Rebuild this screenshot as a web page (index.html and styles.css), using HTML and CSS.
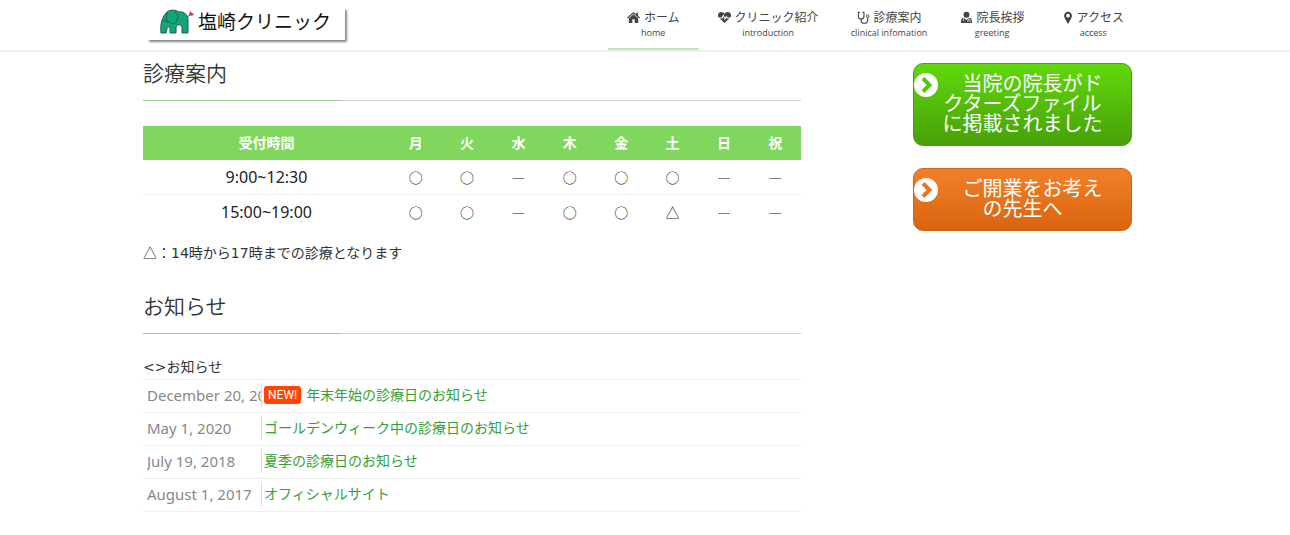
FILE: index.html
```html
<!DOCTYPE html>
<html lang="ja">
<head>
    <meta charset="UTF-8">
    <meta name="viewport" content="width=device-width, initial-scale=1.0">
    <title>塩崎クリニック</title>
    <link rel="stylesheet" href="styles.css">
</head>
<body>
    <header class="site-header">
        <div class="container header-inner">
            <a class="logo" href="#">
                <svg class="logo-mark" viewBox="0 0 34 25" aria-hidden="true">
                    <path d="M1 24C0 15 2 8 7 3c4-3 9-2 12 0 5-1 9 3 9 8v13h-6v-6c-1-3-5-3-6 0v6h-6v-5c-1-2-3-1-3 1l-1 4z" fill="#12a577" stroke="#205f50" stroke-width="1"/>
                    <path d="M8 4c-3 4-2 9 2 9 2 3 6 2 7-2 2-3 1-6-2-8M3 12c2-1 4 0 4 2" fill="none" stroke="#205f50" stroke-width="1"/>
                    <path d="M27 8l3-2" stroke="#205f50" stroke-width="1"/>
                    <path d="M29 6l1-4 2 2 2 1-2 2z" fill="#c43c6c"/>
                </svg>
                <span>塩崎クリニック</span>
            </a>
            <nav class="main-nav">
                <a class="nav-item active" href="#">
                    <span class="nav-label">
                        <svg class="icon" viewBox="0 0 14 14" aria-hidden="true"><path d="M7 1l3 2.600V2h2v3.300l2 1.800-.8.9L7 2.800.8 8 0 7.100zM7 3.600l5 4.200V13H8.300V9H5.700v4H2V7.800z"/></svg>
                        ホーム
                    </span>
                    <span class="nav-sub">home</span>
                </a>
                <a class="nav-item" href="#">
                    <span class="nav-label">
                        <svg class="icon" viewBox="0 0 14 14" aria-hidden="true"><path d="M7 13L1.800 8h3l.9-2 1.800 4 1.500-3 .5 1h2.700zM.6 7C-1 4 .5 1 3.500 1 5 1 6.300 2 7 3c.7-1 2-2 3.500-2 3 0 4.500 3 2.900 6h-3.100L9 4.800 7.500 7.600 5.700 3.500 4.100 7z"/></svg>
                        クリニック紹介
                    </span>
                    <span class="nav-sub">introduction</span>
                </a>
                <a class="nav-item" href="#">
                    <span class="nav-label">
                        <svg class="icon" viewBox="0 0 14 14" aria-hidden="true"><path d="M3 1.500H1.500v4.200c0 4 6 4 6 0V1.500H6M4.500 8.700v1.500c0 4 7 4 7 0V7" fill="none" stroke="currentColor" stroke-width="1.200"/><circle cx="11.500" cy="5.500" r="1.500" fill="none" stroke="currentColor"/></svg>
                        診療案内
                    </span>
                    <span class="nav-sub">clinical infomation</span>
                </a>
                <a class="nav-item" href="#">
                    <span class="nav-label">
                        <svg class="icon" viewBox="0 0 14 14" aria-hidden="true"><circle cx="7" cy="4" r="3.200"/><path d="M4 7.200l3 2.600 3-2.600c2.500.3 3.200 2.800 3 5.800H1c-.2-3 .5-5.500 3-5.800z"/><path d="M3.800 8v3M8.500 12v-1.500c0-1.500 2.500-1.500 2.500 0V12M9.800 9.300V8" fill="none" stroke="#fff" stroke-width=".8"/></svg>
                        院長挨拶
                    </span>
                    <span class="nav-sub">greeting</span>
                </a>
                <a class="nav-item" href="#">
                    <span class="nav-label">
                        <svg class="icon icon-narrow" viewBox="0 0 10 14" aria-hidden="true"><path fill-rule="evenodd" d="M5 .8a4.200 4.200 0 0 1 4.200 4.300c0 1.500-.7 2.400-1.200 3.500l-2.400 4.600c-.3.500-.9.500-1.200 0L2 8.600C1.500 7.500.8 6.600.8 5.100A4.200 4.200 0 0 1 5 .8zM5 3a2 2 0 1 0 0 4 2 2 0 0 0 0-4z"/></svg>
                        アクセス
                    </span>
                    <span class="nav-sub">access</span>
                </a>
            </nav>
        </div>
    </header>

    <div class="container page">
        <main class="content">
            <section>
                <h2>診療案内</h2>
                <table class="hours">
                    <thead>
                        <tr>
                            <th class="time">受付時間</th>
                            <th>月</th><th>火</th><th>水</th><th>木</th><th>金</th><th>土</th><th>日</th><th>祝</th>
                        </tr>
                    </thead>
                    <tbody>
                        <tr>
                            <td class="time">9:00~12:30</td>
                            <td>○</td><td>○</td><td>―</td><td>○</td><td>○</td><td>○</td><td>―</td><td>―</td>
                        </tr>
                        <tr>
                            <td class="time">15:00~19:00</td>
                            <td>○</td><td>○</td><td>―</td><td>○</td><td>○</td><td>△</td><td>―</td><td>―</td>
                        </tr>
                    </tbody>
                </table>
                <p class="note"><span class="symbol">△</span>：14時から17時までの診療となります</p>
            </section>

            <section>
                <h2>お知らせ</h2>
                <div class="news-title">&lt;&gt;お知らせ</div>
                <ul class="news">
                    <li>
                        <span class="date">December 20, 2020</span>
                        <span class="badge">NEW!</span>
                        <a href="#">年末年始の診療日のお知らせ</a>
                    </li>
                    <li>
                        <span class="date">May 1, 2020</span>
                        <a href="#">ゴールデンウィーク中の診療日のお知らせ</a>
                    </li>
                    <li>
                        <span class="date">July 19, 2018</span>
                        <a href="#">夏季の診療日のお知らせ</a>
                    </li>
                    <li>
                        <span class="date">August 1, 2017</span>
                        <a href="#">オフィシャルサイト</a>
                    </li>
                </ul>
            </section>
        </main>

        <aside class="sidebar">
            <a class="banner green" href="#">
                <svg class="banner-icon" viewBox="0 0 24 24" aria-hidden="true"><circle cx="12" cy="12" r="12" fill="#fff"/><path d="M9 5.500l6.500 6.500L9 18.500" fill="none" stroke="#58c50d" stroke-width="4"/></svg>
                <span>　当院の院長がドクターズファイルに掲載されました</span>
            </a>
            <a class="banner orange" href="#">
                <svg class="banner-icon" viewBox="0 0 24 24" aria-hidden="true"><circle cx="12" cy="12" r="12" fill="#fff"/><path d="M9 5.500l6.500 6.500L9 18.500" fill="none" stroke="#e97420" stroke-width="4"/></svg>
                <span>　ご開業をお考えの先生へ</span>
            </a>
        </aside>
    </div>
</body>
</html>
```
FILE: styles.css
```css
* {
    box-sizing: border-box;
}
body {
    margin: 0;
    background: #fff;
    color: #333;
    font-family: "DejaVu Sans", "Noto Sans CJK JP", sans-serif;
    font-size: 14px;
    line-height: 24px;
}
a {
    color: #33a13a;
    text-decoration: none;
}
.container {
    max-width: 1004px;
    margin: 0 auto;
}
.site-header {
    border-bottom: 2px solid #eee;
}
.header-inner {
    display: flex;
    justify-content: space-between;
    align-items: flex-start;
    padding: 0 4px;
}
.logo {
    display: flex;
    align-items: center;
    gap: 4px;
    margin-top: 8px;
    padding: 0 14px 6px 13px;
    color: #111;
    font-family: "Noto Sans CJK JP", sans-serif;
    font-size: 19px;
    line-height: 26px;
    box-shadow: 2px 2px 2px #888;
}
.logo-mark {
    width: 34px;
    height: 25px;
}
.main-nav {
    display: flex;
}
.nav-item {
    padding: 8px 19px;
    border-bottom: 2px solid transparent;
    color: #444;
    font-family: "Noto Sans CJK JP", sans-serif;
    text-align: center;
}
.nav-item.active {
    border-bottom-color: #c2eab4;
}
.nav-label {
    display: flex;
    align-items: center;
    gap: 4px;
    font-size: 12px;
    line-height: 18px;
}
.nav-sub {
    display: block;
    margin: 0 -8px;
    font-family: "Open Sans", sans-serif;
    font-size: 9px;
    line-height: 14px;
    white-space: nowrap;
}
.icon {
    width: 13px;
    height: 13px;
    fill: currentColor;
}
.icon-narrow {
    width: 10px;
}
.page {
    display: flex;
    align-items: flex-start;
    justify-content: space-between;
    gap: 32px;
    padding: 8px 15px 23px 0;
}
.content {
    flex: 0 1 658px;
}
h2 {
    margin: 0 0 25px;
    padding-bottom: 12px;
    border-bottom: 1px solid;
    border-image: linear-gradient(to right, #9ccc8f 30%, #d0d0d0 30%) 1;
    font-size: 21px;
    font-weight: 350;
    line-height: 28px;
}
.hours {
    width: 100%;
    border-collapse: collapse;
    table-layout: fixed;
    color: #222;
    text-align: center;
}
.hours th,
.hours td {
    padding: 5px 0;
    font-family: "Noto Sans CJK JP", sans-serif;
}
.hours th {
    padding: 4px 0 6px;
    background: #80d75d;
    color: #fff;
}
.hours td {
    border-bottom: 1px solid #eee;
}
.hours tr:last-child td {
    border-bottom: 0;
}
.hours .time {
    width: 247px;
}
.hours td.time {
    font-family: "Noto Sans", sans-serif;
    font-size: 16px;
}
.symbol {
    font-family: "Noto Sans CJK JP", sans-serif;
}
.note {
    margin: 11px 0 28px;
}
.news-title {
    margin-top: -4px;
}
.news {
    margin: 0;
    padding: 0;
    border-top: 1px solid #eee;
    list-style: none;
}
.news li {
    display: flex;
    align-items: center;
    padding: 3px 4px 5px;
    border-bottom: 1px solid #eee;
}
.date {
    width: 115px;
    margin-right: 2px;
    border-right: 1px solid #ddd;
    color: #888;
    font-family: "Noto Sans", sans-serif;
    font-size: 15px;
    overflow: hidden;
    white-space: nowrap;
}
.badge {
    margin-right: 5px;
    padding: 0 4px;
    border-radius: 3px;
    background: #ff4500;
    color: #fff;
    font-family: Roboto, sans-serif;
    font-size: 12px;
    line-height: 18px;
}
.sidebar {
    flex: 0 0 219px;
    margin-top: 3px;
}
.banner {
    display: block;
    position: relative;
    margin-bottom: 22px;
    padding: 9px 27px 12px;
    border: 1px solid;
    border-radius: 10px;
    color: #fff;
    font-family: "Noto Sans CJK JP", sans-serif;
    font-size: 20px;
    line-height: 20px;
    text-align: center;
}
.banner-icon {
    position: absolute;
    top: 9px;
    left: 0;
    width: 24px;
    height: 24px;
}
.green {
    border-color: #49a010;
    background: linear-gradient(#61d80d, #48a008);
}
.orange {
    border-color: #c9651c;
    background: linear-gradient(#f28029, #d9640f);
}
```
